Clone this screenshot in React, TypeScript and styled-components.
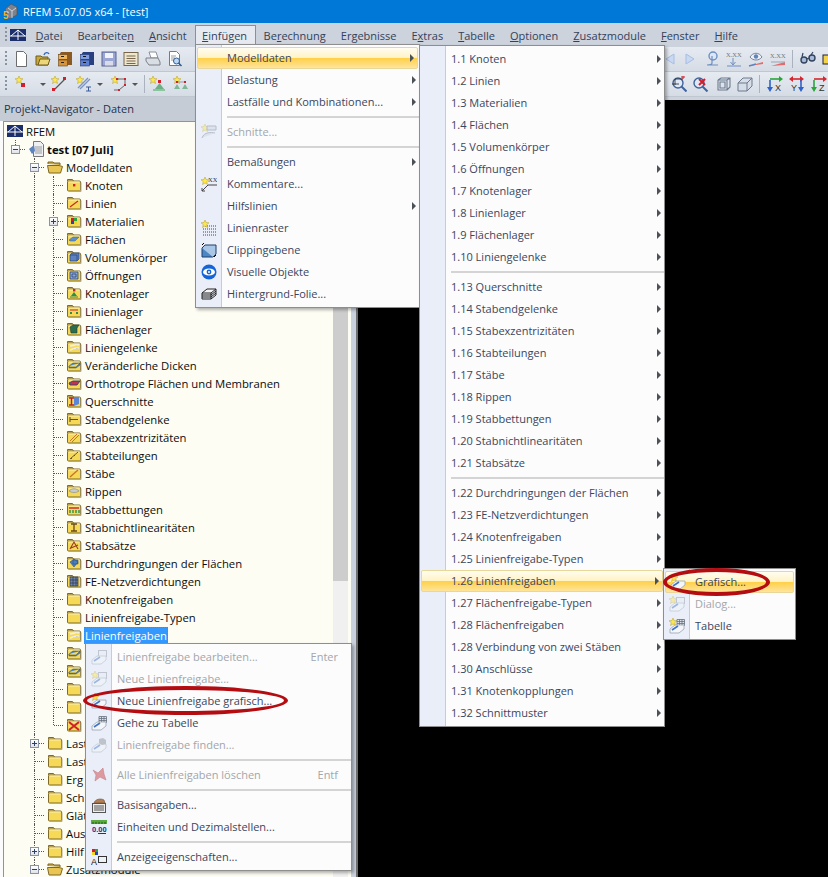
import React from "react";
import styled, { createGlobalStyle } from "styled-components";

const GlobalStyle = createGlobalStyle`
  html, body { margin: 0; padding: 0; background: #000; }
  #root { width: 828px; height: 877px; overflow: hidden; }
`;

const FONT = `"Open Sans", "Noto Sans", sans-serif`;

/* ---------- little drawings ---------- */
const star = (x = 0, y = 0) => (
  <polygon
    transform={`translate(${x} ${y})`}
    points="4,0 5,2.6 8,2.8 5.7,4.6 6.5,7.5 4,5.9 1.5,7.5 2.3,4.6 0,2.8 3,2.6"
    fill="#ffe94a"
    stroke="#b59a2b"
    strokeWidth="0.5"
  />
);

const sheet = (
  <>
    <path d="M1 11 L6 7 H15 V11 L10 15 H1z" fill="#f4f6f9" stroke="#9aa3b0" strokeWidth="0.8" />
    <path d="M3 12 L9 8" stroke="#3f74c9" strokeWidth="1.6" />
  </>
);

const panel = <rect x="7.5" y="1.5" width="8" height="6" fill="#e8edf5" stroke="#8d97a6" />;

const table = (
  <path d="M8 1.5h7.5v6H8zM8 3.5h7.5M8 5.5h7.5M10.5 1.5v6M13 1.5v6" fill="#dfe4ec" stroke="#67707e" strokeWidth="0.8" />
);

const GLYPHS: Record<string, React.ReactNode> = {
  logo: (
    <>
      <rect x="0" y="2" width="16" height="12" fill="#1c2f6d" />
      <path d="M0 9h16M8 3v10M8 3L1 9M8 3l7 6" stroke="#fff" strokeWidth="1" fill="none" />
    </>
  ),
  doc: <path d="M3.5 0.5h7l3 3v12h-10z" fill="#fff" stroke="#6c6c6c" />,
  open: (
    <>
      <path d="M1 5h5l1 1h6v8H1z" fill="#caa93c" stroke="#6f5b1d" />
      <path d="M3 14l2-6h10l-2 6z" fill="#ecd778" stroke="#6f5b1d" />
      <path d="M9 4c1-3 4-3 5-1" stroke="#3568b5" strokeWidth="1.4" fill="none" />
    </>
  ),
  drawerOrange: (
    <>
      <path d="M4 1h11v13H2V4z" fill="#8b5a22" />
      <rect x="1.5" y="3.5" width="9" height="5" fill="#f0b45c" stroke="#6a4315" strokeWidth="0.6" />
      <rect x="1.5" y="9" width="9" height="6" fill="#d8923a" stroke="#6a4315" strokeWidth="0.6" />
      <path d="M4 5.5h3M4 11.5h3" stroke="#222" />
    </>
  ),
  drawerBlue: (
    <>
      <path d="M4 1h11v13H2V4z" fill="#28407f" />
      <rect x="1.5" y="3.5" width="9" height="5" fill="#7e9de0" stroke="#233874" strokeWidth="0.6" />
      <rect x="1.5" y="9" width="9" height="6" fill="#5c7fcf" stroke="#233874" strokeWidth="0.6" />
      <path d="M4 5.5h3M4 11.5h3" stroke="#111" />
    </>
  ),
  save: (
    <>
      <rect x="1" y="1" width="14" height="14" fill="#9aa6d6" stroke="#59638f" />
      <rect x="4" y="2" width="8" height="5" fill="#f2f3f8" />
      <rect x="4" y="10" width="8" height="4.5" fill="#d9dce8" />
    </>
  ),
  notes: (
    <>
      <rect x="1" y="1.5" width="14" height="13" fill="#efe6d0" stroke="#77664a" />
      <path d="M3.5 5h9M3.5 7.5h9M3.5 10h9M3.5 12.5h9" stroke="#77664a" />
    </>
  ),
  printer: (
    <>
      <path d="M4 1h7l2 6H6z" fill="#fff" stroke="#8a8f99" />
      <path d="M1 7h12l2 4v3H4L1 10z" fill="#d9dde4" stroke="#7b808a" />
    </>
  ),
  preview: (
    <>
      <path d="M2.5 0.5h7l3 3v11h-10z" fill="#fff" stroke="#7a7a7a" />
      <path d="M4 5h5M4 7h4M4 9h3" stroke="#9a9a9a" />
      <circle cx="9.5" cy="10" r="3" fill="#bcd8f2" stroke="#2d5e9a" />
      <path d="M11.5 12l3 3" stroke="#2d5e9a" strokeWidth="1.6" />
    </>
  ),
  node: (
    <>
      {star(1, 0)}
      <rect x="7" y="7" width="4" height="4" fill="#d11f2b" />
    </>
  ),
  line: (
    <>
      {star(0, 0)}
      <path d="M3 14L14 3" stroke="#555" strokeWidth="1.2" />
      <rect x="12" y="1" width="3" height="3" fill="#d11f2b" />
      <rect x="1" y="12" width="3" height="3" fill="#d11f2b" />
    </>
  ),
  member: (
    <>
      {star(0, 0)}
      <path d="M2 12L12 2M4 13L14 3" stroke="#7c94c4" strokeWidth="1.4" />
      <path d="M10 11h5M12.5 11v4M10 15h5" stroke="#3c5a9a" />
    </>
  ),
  poly: (
    <>
      {star(0, 0)}
      <path d="M6 3h8v6l-6 5H3" stroke="#666" fill="none" />
      <path d="M5 2h2v2H5zM13 2h2v2h-2zM13 8h2v2h-2zM7 13h2v2H7z" fill="#d11f2b" />
    </>
  ),
  support: (
    <>
      {star(0, 0)}
      <rect x="9" y="4" width="3" height="3" fill="#d11f2b" />
      <path d="M10.5 7L15 13H6z" fill="#69b082" />
      <rect x="4" y="13" width="12" height="2" fill="#8cc4a0" />
    </>
  ),
  supports: (
    <>
      {star(0, 0)}
      <path d="M4 6h8" stroke="#999" />
      <path d="M3 5h2v2H3zM11 5h2v2h-2z" fill="#d11f2b" />
      <path d="M4 8l3 5H1zM12 8l3 5H9z" fill="#7fb794" />
    </>
  ),
  triLeft: <path d="M12 3v10L4 8z" fill="#c9d9f2" stroke="#a7bde2" />,
  triRight: <path d="M4 3v10l8-5z" fill="#c9d9f2" stroke="#a7bde2" />,
  pin: (
    <>
      <circle cx="9" cy="5" r="4" fill="#dce6f4" stroke="#6e8fc2" strokeWidth="1.4" />
      <path d="M8 5v7c0 2-3 2-5 2h11" stroke="#6e8fc2" strokeWidth="1.2" fill="none" />
    </>
  ),
  xxArrow: (
    <>
      <text x="0" y="6" fontSize="6.5" fontFamily="Liberation Serif, serif" fill="#777">X.XX</text>
      <path d="M7 7v6M4.5 11L7 14l2.5-3M1 15h14" stroke="#6e8fc2" fill="none" />
    </>
  ),
  eye: (
    <>
      <path d="M2 6c3-5 9-5 12 0c-3 4-9 4-12 0z" fill="#eef1f6" stroke="#7a8494" />
      <circle cx="8" cy="5.5" r="2.2" fill="#5f83bd" />
      <path d="M1 15l14-4v2L1 15z" fill="#e36b6b" />
      <path d="M1 15l7-2" stroke="#5f83bd" strokeWidth="1.4" />
    </>
  ),
  xxSlope: (
    <>
      <text x="0" y="7" fontSize="6.5" fontFamily="Liberation Serif, serif" fill="#777">X.XX</text>
      <path d="M1 15l14-4v3z" fill="#e36b6b" />
      <path d="M1 11h14" stroke="#9aa3b0" />
    </>
  ),
  glasses: (
    <>
      <circle cx="4" cy="9" r="3" fill="#a8bcd8" stroke="#33445f" strokeWidth="1.4" />
      <circle cx="12" cy="7" r="3" fill="#a8bcd8" stroke="#33445f" strokeWidth="1.4" />
      <path d="M6.5 8l3-1M2 6l1-4M11 4l2-3" stroke="#33445f" strokeWidth="1.2" />
    </>
  ),
  yellowBox: <rect x="1" y="4" width="6" height="9" fill="#f3d24e" stroke="#222" />,
  zoomRect: (
    <>
      <circle cx="7" cy="7" r="5" fill="#dfe9f6" stroke="#3f639c" strokeWidth="1.4" />
      <path d="M10.5 10.5l5 5" stroke="#3f639c" strokeWidth="2" />
      <path d="M4 9V3h8M1 8h7" stroke="#222" strokeWidth="0.8" fill="none" />
      <path d="M12 0v3M14 1h-4" stroke="#d11f2b" />
    </>
  ),
  zoomX: (
    <>
      <circle cx="6" cy="7" r="5" fill="#dfe9f6" stroke="#3f639c" strokeWidth="1.4" />
      <path d="M9.5 10.5l5 5" stroke="#3f639c" strokeWidth="2" />
      <path d="M6 3l6 6M12 3L6 9" stroke="#d11f2b" strokeWidth="2" />
    </>
  ),
  cube: (
    <path d="M3 4h9l3-2M3 4v10h9V4M12 14l3-3V2H6L3 4M5 6h5v6H5z" fill="#dde4ee" stroke="#6d7a8c" strokeWidth="1.1" />
  ),
  cubeSolid: (
    <>
      <path d="M1 7l5-5h9v8l-5 5H1z" fill="#d6dde8" stroke="#6d7a8c" />
      <path d="M1 7h9v8M10 7l5-5" stroke="#6d7a8c" fill="none" />
    </>
  ),
  axisX: (
    <>
      <path d="M3 3h11" stroke="#2ba53b" strokeWidth="1.6" />
      <path d="M12 0l4 3-4 3zM3 3v11" fill="#2ba53b" />
      <path d="M3 4v9" stroke="#2f62c8" strokeWidth="1.6" />
      <path d="M0 11l3 5 3-5z" fill="#2f62c8" />
      <text x="8" y="15" fontSize="9" fontFamily="Liberation Sans, sans-serif" fill="#333">X</text>
    </>
  ),
  axisY: (
    <>
      <path d="M2 3h11" stroke="#d8262e" strokeWidth="1.6" />
      <path d="M4 0L0 3l4 3zM11 0l4 3-4 3z" fill="#d8262e" />
      <path d="M12 4v9" stroke="#2f62c8" strokeWidth="1.6" />
      <path d="M9 11l3 5 3-5z" fill="#2f62c8" />
      <text x="2" y="15" fontSize="9" fontFamily="Liberation Sans, sans-serif" fill="#333">Y</text>
    </>
  ),
  axisZ: (
    <>
      <path d="M3 3h11" stroke="#d8262e" strokeWidth="1.6" />
      <path d="M12 0l4 3-4 3z" fill="#d8262e" />
      <path d="M3 4v9" stroke="#2ba53b" strokeWidth="1.6" />
      <path d="M0 11l3 5 3-5z" fill="#2ba53b" />
      <text x="8" y="15" fontSize="9" fontFamily="Liberation Sans, sans-serif" fill="#333">Z</text>
    </>
  ),
  schnitte: (
    <g opacity="0.45">
      {star(0, 0)}
      <path d="M6 2h9v4H6zM1 14c2-6 9-6 13-5" fill="#cfd6e2" stroke="#7a8494" />
    </g>
  ),
  comment: (
    <>
      {star(0, 1)}
      <text x="7" y="6" fontSize="6.5" fontFamily="Liberation Serif, serif" fill="#333">XX</text>
      <path d="M1 15L7 9h9M1 15v-3M1 15h3" stroke="#444" fill="none" />
    </>
  ),
  raster: (
    <>
      <path d="M2 6h13M2 9h13M2 12h13M2 15h13" stroke="#444" strokeDasharray="1 1" />
      {star(0, 0)}
    </>
  ),
  clip: (
    <>
      <path d="M1 6h11v9H1z" fill="#4d86c5" stroke="#1f3f6b" />
      <path d="M1 6l3-3h11v9l-3 3" fill="#a9c6e6" stroke="#1f3f6b" />
      <path d="M3 1L1 3M13 15l2-2" stroke="#000" />
    </>
  ),
  visual: (
    <>
      <circle cx="8" cy="8" r="7.5" fill="#1565d8" />
      <ellipse cx="8" cy="8" rx="6" ry="3.6" fill="#fff" />
      <circle cx="8" cy="8" r="2.4" fill="#1565d8" />
      <circle cx="8" cy="8" r="1" fill="#fff" />
    </>
  ),
  folie: (
    <>
      <path d="M1 7L6 3h9l-5 4z" fill="#f5f5f5" stroke="#222" />
      <path d="M1 7v2h9l5-4V3M1 9v2h9l5-4V5M1 11v2h9l5-4V7M10 7v6" stroke="#222" fill="none" />
    </>
  ),
  lfEdit: <g opacity="0.45">{panel}{sheet}</g>,
  lfNew: <g opacity="0.45">{star(0, 0)}{panel}{sheet}</g>,
  lfDraw: <>{star(0, 0)}{sheet}</>,
  lfTable: <>{star(0, 0)}{table}{sheet}</>,
  lfTableOnly: <>{table}{sheet}</>,
  lfFind: (
    <g opacity="0.45">
      {sheet}
      <path d="M8 2l4-1 3 2v4l-4 1-3-2z" fill="#8b8f96" />
    </g>
  ),
  deleteAll: (
    <path d="M2 3l5 3 5-5 1 6 2 6-6-3-5 4 1-6z" fill="#dc9aa0" stroke="#c98088" strokeWidth="0.6" />
  ),
  basis: (
    <>
      <rect x="1.5" y="6.5" width="13" height="9" fill="#eee" stroke="#555" />
      <path d="M3 9h10M3 11h10M3 13h10" stroke="#555" />
      <path d="M3 6c1-4 7-5 10-3l1 3z" fill="#b08058" stroke="#6e4a30" strokeWidth="0.6" />
    </>
  ),
  units: (
    <>
      <rect x="0" y="1" width="16" height="4" fill="#5aa93f" />
      <path d="M2 3v2M5 3v2M8 3v2M11 3v2M14 3v2" stroke="#1f5a12" />
      <text x="1" y="13" fontSize="7.5" fontWeight="700" fontFamily="Liberation Sans, sans-serif" fill="#1b2f9a">0.00</text>
      <path d="M7 14.5h8" stroke="#1b2f9a" />
    </>
  ),
  display: (
    <>
      <rect x="1" y="0" width="3" height="3" fill="#d11f2b" />
      <rect x="4" y="0" width="3" height="3" fill="#2ba53b" />
      <rect x="1" y="3" width="3" height="3" fill="#f1d42a" />
      <rect x="4" y="3" width="3" height="3" fill="#2046c8" />
      <rect x="7.5" y="7.5" width="8" height="6" fill="#eef1f6" stroke="#333" />
      <text x="0" y="15.5" fontSize="9" fontFamily="Liberation Sans, sans-serif" fill="#111">A</text>
    </>
  ),
  docPage: (
    <>
      <path d="M5.5 0.5h7l3 3v12h-10z" fill="#eef0f4" stroke="#777" />
      <path d="M7 6h7M7 8h7M7 10h7M7 12h7" stroke="#999" />
      <path d="M1 8l5-4 1 6-3 3z" fill="#5f83bd" />
    </>
  ),
};

const Ico = ({ name }: { name: string }) => (
  <svg width="16" height="16" viewBox="0 0 16 16" style={{ display: "block" }}>
    {GLYPHS[name]}
  </svg>
);

const MARKS: Record<string, React.ReactNode> = {
  dot: <rect x="7" y="7" width="2.4" height="2.4" fill="#d11f2b" />,
  line: <path d="M4 12l8-6" stroke="#c9262b" strokeWidth="1.1" />,
  mat: (
    <>
      <rect x="5" y="5" width="3" height="3" fill="#d11f2b" />
      <rect x="8" y="5" width="3" height="3" fill="#2ba53b" />
      <rect x="5" y="8" width="3" height="3" fill="#2046c8" />
      <rect x="8" y="8" width="3" height="3" fill="#f1d42a" />
    </>
  ),
  plane: <path d="M3 9l4-3h6l-4 4H4z" fill="#5b8fd0" stroke="#35608f" strokeWidth="0.5" />,
  cube: <path d="M4 6h7v6H4zM4 6l2-2h7v6l-2 2" fill="#5d82c0" stroke="#27457c" strokeWidth="0.7" />,
  hole: <path d="M4 5h8v7H4zM6 7h4v3H6z" fill="#8fa8cf" stroke="#27457c" strokeWidth="0.8" />,
  nodeSup: (
    <>
      <rect x="7" y="4" width="2.4" height="2.4" fill="#d11f2b" />
      <path d="M8 7l3 4H5z" fill="#2f8e4f" />
      <path d="M4 12h8" stroke="#2f8e4f" />
    </>
  ),
  lineSup: (
    <>
      <path d="M4 7h8" stroke="#c9262b" />
      <path d="M4 10h2M10 10h2" stroke="#2f8e4f" strokeWidth="2" />
    </>
  ),
  surfSup: <path d="M4 6l3-2h6l-2 3v5H5z" fill="#2c6c4f" stroke="#1d3f32" strokeWidth="0.6" />,
  hinge: <path d="M4 7l6-1h3M4 11l6-2h3" stroke="#eef1f6" strokeWidth="1.4" />,
  slab: <path d="M3 9l4-3h7l-4 4H3zM3 9v2h7l4-3V6" fill="#4f83c6" stroke="#2b507f" strokeWidth="0.5" />,
  ortho: <path d="M3 8l4-2h7l-3 4H4z" fill="#c9304a" stroke="#27457c" strokeWidth="0.9" />,
  section: (
    <>
      <path d="M8 4h5v7l-5 2z" fill="#5b86d6" />
      <path d="M3 5h5M3 12h5M5.5 5v7" stroke="#b4202c" strokeWidth="1.4" />
    </>
  ),
  memHinge: <path d="M4 6v5M4 8.5h8" stroke="#5c5032" strokeWidth="1.1" />,
  ecc: <path d="M4 12l7-7M6 13l7-7" stroke="#c9742b" strokeWidth="1" />,
  split: (
    <>
      <path d="M4 12l8-7" stroke="#6a5a30" />
      <path d="M5 11h1v1H5zM8 8h1v1H8zM11 5h1v1h-1z" fill="#d11f2b" />
    </>
  ),
  member: <path d="M4 12l8-7" stroke="#c9742b" strokeWidth="1.4" />,
  rib: <path d="M3 8c3-3 7-3 10 0c-3 2-7 2-10 0z" fill="#c8ccd2" stroke="#7d848e" strokeWidth="0.6" />,
  bed: (
    <>
      <path d="M3 7h10" stroke="#c9262b" strokeWidth="1.4" />
      <path d="M4 9v3M7 9v3M10 9v3M13 9v3" stroke="#2f8e4f" strokeWidth="1.4" />
    </>
  ),
  nonlin: <path d="M5 5h6M5 12h6M8 5v7" stroke="#6a4a14" strokeWidth="1.3" />,
  set: <path d="M4 12l4-7 4 7M5 11l7-3" stroke="#9a3a20" strokeWidth="1.1" fill="none" />,
  inter: <path d="M4 7l4-3 4 3-4 5zM7 5h5v4H7z" fill="#4a7fc0" stroke="#2b507f" strokeWidth="0.6" />,
  mesh: <path d="M4 4h8v9H4zM4 7h8M4 10h8M7 4v9M10 4v9" fill="#6f86ad" stroke="#2b3850" strokeWidth="0.7" />,
  cross: <path d="M3 5l10 8M13 5L3 13" stroke="#d11f2b" strokeWidth="2" />,
};

const Folder = ({ mark, open }: { mark?: string; open?: boolean }) => (
  <svg width="16" height="16" viewBox="0 0 16 16" style={{ display: "block", flexShrink: 0 }}>
    {open ? (
      <>
        <path d="M1 5V3h5l1 1h6v2" fill="#c9a73c" stroke="#7c6727" />
        <path d="M0.5 6.5h11.5l3.5 1-2 6.5H2z" fill="#e9c653" stroke="#7c6727" />
      </>
    ) : (
      <>
        <path d="M1.5 4V2.5h5l1 1.5" fill="#f2d874" stroke="#7f6a28" />
        <rect x="1.5" y="4" width="13" height="10" rx="1" fill="#f6d957" stroke="#7f6a28" />
        <path d="M2.5 5h11" stroke="#fdf3b8" />
        <path d="M3 14.5h12v-9" stroke="#b6a888" fill="none" />
      </>
    )}
    {mark && MARKS[mark]}
  </svg>
);

/* ---------- window chrome ---------- */
const Page = styled.div`
  width: 828px;
  height: 877px;
  display: flex;
  flex-direction: column;
  overflow: hidden;
  position: relative;
  font-family: ${FONT};
  background: #ccd3dd;
`;

const TitleBar = styled.div`
  height: 23px;
  background: #0078d7;
  color: #fff;
  font-size: 11px;
  display: flex;
  align-items: center;
  gap: 5px;
  padding-left: 2px;
  flex-shrink: 0;
`;

const MenuBar = styled.div`
  height: 24px;
  background: #ccd3dd;
  display: flex;
  align-items: center;
  padding-left: 5px;
  font-size: 11px;
  color: #33415a;
  flex-shrink: 0;
  position: relative;
`;

const Grip = styled.span`
  width: 2px;
  height: 16px;
  flex-shrink: 0;
  background: repeating-linear-gradient(#8a93a0 0 2px, transparent 2px 4px);
`;

const MenuEntry = styled.span<{ $open?: boolean }>`
  padding: ${(p) => (p.$open ? "0 9px 0 7px" : "0 7.5px")};
  margin-left: ${(p) => (p.$open ? "1px" : "0")};
  height: ${(p) => (p.$open ? "21px" : "auto")};
  display: flex;
  align-items: center;
  white-space: nowrap;
  ${(p) => p.$open && "background: #e6eaf0; outline: 1px solid #8b9097; outline-offset: -1px;"}
`;

const LogoSlot = styled.span`
  margin: 0 2px 0 3px;
`;

const Toolbar = styled.div<{ $h: number }>`
  height: ${(p) => p.$h}px;
  flex-shrink: 0;
  background: linear-gradient(#e6ebf2, #d6dce5);
  border-bottom: 1px solid #c0c7d1;
  box-sizing: border-box;
  display: flex;
  align-items: center;
  padding-left: 5px;
  overflow: hidden;
`;

const Tool = styled.span<{ $ml?: number }>`
  flex-shrink: 0;
  width: 16px;
  height: 16px;
  margin-left: ${(p) => p.$ml ?? 6}px;
`;

const Caret = styled.span<{ $ml: number }>`
  flex-shrink: 0;
  margin-left: ${(p) => p.$ml}px;
  border-left: 3px solid transparent;
  border-right: 3px solid transparent;
  border-top: 3px solid #555;
`;

const ToolSep = styled.span<{ $ml?: number }>`
  flex-shrink: 0;
  width: 1px;
  height: 18px;
  background: #aab2be;
  margin-left: ${(p) => p.$ml ?? 6}px;
`;

const ToolRight = styled.div<{ $w: number }>`
  margin-left: auto;
  width: ${(p) => p.$w}px;
  display: flex;
  align-items: center;
  flex-shrink: 0;
  overflow: hidden;
`;

/* ---------- working area ---------- */
const Work = styled.div`
  flex: 1;
  display: flex;
  min-height: 0;
`;

const Navigator = styled.div`
  width: 351px;
  display: flex;
  flex-direction: column;
  padding-left: 3px;
  box-sizing: border-box;
  background: #fbfbfb;
  flex-shrink: 0;
`;

const NavTitle = styled.div`
  height: 24px;
  margin-left: -3px;
  background: #c5ccd6;
  color: #26324a;
  font-size: 11px;
  padding: 0 0 2px 4px;
  box-sizing: border-box;
  display: flex;
  align-items: center;
  flex-shrink: 0;
`;

const TreeBox = styled.div`
  flex: 1;
  min-height: 0;
  display: flex;
  background: #fdfdf4;
  border-left: 1px solid #8d95a3;
  border-top: 1px solid #8d95a3;
  margin-top: 0;
`;

const TreeRows = styled.div`
  flex: 1;
  min-width: 0;
  overflow: hidden;
  padding-left: 2px;
`;

const ScrollTrack = styled.div`
  width: 15px;
  margin-right: 3px;
  background: #f0f0f0;
  flex-shrink: 0;
`;

const ScrollThumb = styled.div`
  height: 459px;
  background: #cdcdcd;
`;

const Splitter = styled.div`
  width: 7px;
  flex-shrink: 0;
  background: #c9d1dc;
  border-right: 2px solid #6f6f6f;
  box-sizing: border-box;
  margin-top: 3px;
`;

const Canvas = styled.div`
  flex: 1;
  background: #000;
  margin-top: 3px;
`;

/* ---------- tree ---------- */
const Row = styled.div`
  height: 18px;
  display: flex;
  align-items: center;
  font-size: 11.3px;
  color: #0c0c0c;
  white-space: nowrap;
`;

const Cell = styled.span<{ $kind: "none" | "line" | "tee" | "corner" | "start" }>`
  width: 19px;
  height: 18px;
  flex-shrink: 0;
  position: relative;
  &::before {
    content: "";
    position: absolute;
    left: 9px;
    top: ${(p) => (p.$kind === "start" ? "9px" : "0")};
    height: ${(p) => (p.$kind === "corner" ? "9px" : p.$kind === "start" ? "9px" : "18px")};
    border-left: 1px dotted ${(p) => (p.$kind === "none" ? "transparent" : "#555")};
  }
  &::after {
    content: "";
    position: absolute;
    left: 10px;
    top: 9px;
    width: 9px;
    border-top: 1px dotted ${(p) => (p.$kind === "tee" || p.$kind === "corner" ? "#555" : "transparent")};
  }
`;

const Expander = styled.span`
  position: absolute;
  z-index: 1;
  left: 5px;
  top: 5px;
  width: 7px;
  height: 7px;
  border: 1px solid #8a93a6;
  background: linear-gradient(#fff, #dfe3ea);
  &::before {
    content: "";
    position: absolute;
    left: 1px;
    right: 1px;
    top: 3px;
    height: 1px;
    background: #2c3f66;
  }
`;

const PlusBar = styled.span`
  position: absolute;
  left: 3px;
  top: 1px;
  bottom: 1px;
  width: 1px;
  background: #2c3f66;
`;

const RowIcon = styled.span<{ $root?: boolean }>`
  margin-left: ${(p) => (p.$root ? 1 : 3)}px;
  flex-shrink: 0;
`;

const RowLabel = styled.span<{ $bold?: boolean; $selected?: boolean }>`
  margin-left: 2px;
  padding: 0 1px;
  line-height: 17px;
  font-weight: ${(p) => (p.$bold ? 700 : 400)};
  ${(p) => p.$selected && "background: #3399ff; color: #fff; outline: 1px dotted #c66a1e; outline-offset: -1px;"}
`;

type TreeItem = { label: string; mark?: string; exp?: "plus" | "minus"; last?: boolean; selected?: boolean };

const CHILDREN: TreeItem[] = [
  { label: "Knoten", mark: "dot" },
  { label: "Linien", mark: "line" },
  { label: "Materialien", mark: "mat", exp: "plus" },
  { label: "Flächen", mark: "plane" },
  { label: "Volumenkörper", mark: "cube" },
  { label: "Öffnungen", mark: "hole" },
  { label: "Knotenlager", mark: "nodeSup" },
  { label: "Linienlager", mark: "lineSup" },
  { label: "Flächenlager", mark: "surfSup" },
  { label: "Liniengelenke", mark: "hinge" },
  { label: "Veränderliche Dicken", mark: "slab" },
  { label: "Orthotrope Flächen und Membranen", mark: "ortho" },
  { label: "Querschnitte", mark: "section" },
  { label: "Stabendgelenke", mark: "memHinge" },
  { label: "Stabexzentrizitäten", mark: "ecc" },
  { label: "Stabteilungen", mark: "split" },
  { label: "Stäbe", mark: "member" },
  { label: "Rippen", mark: "rib" },
  { label: "Stabbettungen", mark: "bed" },
  { label: "Stabnichtlinearitäten", mark: "nonlin" },
  { label: "Stabsätze", mark: "set" },
  { label: "Durchdringungen der Flächen", mark: "inter" },
  { label: "FE-Netzverdichtungen", mark: "mesh" },
  { label: "Knotenfreigaben" },
  { label: "Linienfreigabe-Typen" },
  { label: "Linienfreigaben", mark: "hinge", selected: true },
  // the next rows lie wholly behind the context menu, so they show no label
  { label: "", mark: "slab" },
  { label: "", mark: "slab" },
  { label: "" },
  { label: "" },
  { label: "", mark: "cross", last: true },
];

// only the start of these labels shows left of the context menu
const SECTIONS: TreeItem[] = [
  { label: "Last", exp: "plus" },
  { label: "Last" },
  { label: "Erg" },
  { label: "Sch" },
  { label: "Glät" },
  { label: "Aus" },
  { label: "Hilf", exp: "plus" },
];

const Toggle = ({ exp }: { exp?: "plus" | "minus" }) =>
  exp ? <Expander>{exp === "plus" && <PlusBar />}</Expander> : null;

const Tree = () => (
  <TreeRows>
    <Row>
      <RowIcon $root>
        <Ico name="logo" />
      </RowIcon>
      <RowLabel>RFEM</RowLabel>
    </Row>
    <Row>
      <Cell $kind="corner">
        <Toggle exp="minus" />
      </Cell>
      <RowIcon>
        <Ico name="docPage" />
      </RowIcon>
      <RowLabel $bold>test [07 Juli]</RowLabel>
    </Row>
    <Row>
      <Cell $kind="none" />
      <Cell $kind="tee">
        <Toggle exp="minus" />
      </Cell>
      <RowIcon>
        <Folder open />
      </RowIcon>
      <RowLabel>Modelldaten</RowLabel>
    </Row>
    {CHILDREN.map((item, i) => (
      <Row key={i}>
        <Cell $kind="none" />
        <Cell $kind="line" />
        <Cell $kind={item.last ? "corner" : "tee"}>
          <Toggle exp={item.exp} />
        </Cell>
        <RowIcon>
          <Folder mark={item.mark} />
        </RowIcon>
        {item.label && <RowLabel $selected={item.selected}>{item.label}</RowLabel>}
      </Row>
    ))}
    {SECTIONS.map((item, i) => (
      <Row key={i}>
        <Cell $kind="none" />
        <Cell $kind="tee">
          <Toggle exp={item.exp} />
        </Cell>
        <RowIcon>
          <Folder />
        </RowIcon>
        <RowLabel>{item.label}</RowLabel>
      </Row>
    ))}
    <Row>
      <Cell $kind="none" />
      <Cell $kind="corner">
        <Toggle exp="minus" />
      </Cell>
      <RowIcon>
        <Folder open />
      </RowIcon>
      <RowLabel>Zusatzmodule</RowLabel>
    </Row>
  </TreeRows>
);

/* ---------- popup menus ---------- */
const Popup = styled.div<{ $x: number; $y: number; $w: number }>`
  position: absolute;
  left: ${(p) => p.$x}px;
  top: ${(p) => p.$y}px;
  width: ${(p) => p.$w}px;
  box-sizing: border-box;
  padding: 2px 0;
  border: 1px solid #8e8e8e;
  box-shadow: 2px 2px 3px rgba(0, 0, 0, 0.3);
  background: linear-gradient(to right, #e9eef8 25px, #c6cbd4 25px, #c6cbd4 26px, #fcfcfc 26px);
  font-size: 11px;
  color: #3a4660;
  z-index: 2;
`;

const Item = styled.div<{ $active?: boolean; $off?: boolean }>`
  height: 22px;
  box-sizing: border-box;
  display: flex;
  align-items: center;
  position: relative;
  white-space: nowrap;
  color: ${(p) => (p.$off ? "#a3a6ab" : "inherit")};
  ${(p) =>
    p.$active &&
    `margin: 0 1px;
     border: 1px solid #e9d69a;
     border-radius: 2px;
     background: linear-gradient(#fffdf0 0%, #fff3c6 48%, #ffd04a 52%, #ffe59c 100%);`}
`;

const ItemIcon = styled.span<{ $active?: boolean }>`
  width: ${(p) => (p.$active ? "23px" : "25px")};
  display: flex;
  justify-content: center;
  flex-shrink: 0;
`;

const ItemLabel = styled.span`
  margin: 0 0 2px 6px;
`;

const Shortcut = styled.span`
  margin: 0 13px 2px auto;
`;

const Arrow = styled.span`
  margin-left: auto;
  margin-right: 3px;
  border-left: 4px solid #4c5157;
  border-top: 4px solid transparent;
  border-bottom: 4px solid transparent;
`;

const Sep = styled.div`
  height: 8px;
  margin-left: 31px;
  position: relative;
  &::before {
    content: "";
    position: absolute;
    left: 0;
    right: 0;
    top: 3px;
    height: 2px;
    background: #d4d4d4;
  }
`;

const RedRing = styled.span<{ $x: number; $y: number; $w: number; $h: number }>`
  position: absolute;
  left: ${(p) => p.$x}px;
  top: ${(p) => p.$y}px;
  width: ${(p) => p.$w}px;
  height: ${(p) => p.$h}px;
  box-sizing: border-box;
  border: 4px solid #b30d12;
  border-radius: 50%;
  z-index: 3;
`;

type Entry =
  | "sep"
  | { label: string; icon?: string; sub?: boolean; off?: boolean; active?: boolean; key?: string };

const Menu = ({ x, y, w, entries }: { x: number; y: number; w: number; entries: Entry[] }) => (
  <Popup $x={x} $y={y} $w={w}>
    {entries.map((e, i) =>
      e === "sep" ? (
        <Sep key={i} />
      ) : (
        <Item key={i} $active={e.active} $off={e.off}>
          <ItemIcon $active={e.active}>{e.icon && <Ico name={e.icon} />}</ItemIcon>
          <ItemLabel>{e.label}</ItemLabel>
          {e.key && <Shortcut>{e.key}</Shortcut>}
          {e.sub && <Arrow />}
        </Item>
      )
    )}
  </Popup>
);

const sub = (label: string, active?: boolean): Entry => ({ label, sub: true, active });

const INSERT: Entry[] = [
  sub("Modelldaten", true),
  sub("Belastung"),
  sub("Lastfälle und Kombinationen..."),
  "sep",
  { label: "Schnitte...", icon: "schnitte", off: true },
  "sep",
  sub("Bemaßungen"),
  { label: "Kommentare...", icon: "comment" },
  sub("Hilfslinien"),
  { label: "Linienraster", icon: "raster" },
  { label: "Clippingebene", icon: "clip" },
  { label: "Visuelle Objekte", icon: "visual" },
  { label: "Hintergrund-Folie...", icon: "folie" },
];

const MODEL: Entry[] = [
  sub("1.1 Knoten"),
  sub("1.2 Linien"),
  sub("1.3 Materialien"),
  sub("1.4 Flächen"),
  sub("1.5 Volumenkörper"),
  sub("1.6 Öffnungen"),
  sub("1.7 Knotenlager"),
  sub("1.8 Linienlager"),
  sub("1.9 Flächenlager"),
  sub("1.10 Liniengelenke"),
  "sep",
  sub("1.13 Querschnitte"),
  sub("1.14 Stabendgelenke"),
  sub("1.15 Stabexzentrizitäten"),
  sub("1.16 Stabteilungen"),
  sub("1.17 Stäbe"),
  sub("1.18 Rippen"),
  sub("1.19 Stabbettungen"),
  sub("1.20 Stabnichtlinearitäten"),
  sub("1.21 Stabsätze"),
  "sep",
  sub("1.22 Durchdringungen der Flächen"),
  sub("1.23 FE-Netzverdichtungen"),
  sub("1.24 Knotenfreigaben"),
  sub("1.25 Linienfreigabe-Typen"),
  sub("1.26 Linienfreigaben", true),
  sub("1.27 Flächenfreigabe-Typen"),
  sub("1.28 Flächenfreigaben"),
  sub("1.28 Verbindung von zwei Stäben"),
  sub("1.30 Anschlüsse"),
  sub("1.31 Knotenkopplungen"),
  sub("1.32 Schnittmuster"),
];

const RELEASE: Entry[] = [
  { label: "Grafisch...", icon: "lfDraw", active: true },
  { label: "Dialog...", icon: "lfNew", off: true },
  { label: "Tabelle", icon: "lfTable" },
];

const CONTEXT: Entry[] = [
  { label: "Linienfreigabe bearbeiten...", icon: "lfEdit", off: true, key: "Enter" },
  { label: "Neue Linienfreigabe...", icon: "lfNew", off: true },
  { label: "Neue Linienfreigabe grafisch...", icon: "lfDraw" },
  { label: "Gehe zu Tabelle", icon: "lfTableOnly" },
  { label: "Linienfreigabe finden...", icon: "lfFind", off: true },
  "sep",
  { label: "Alle Linienfreigaben löschen", icon: "deleteAll", off: true, key: "Entf" },
  "sep",
  { label: "Basisangaben...", icon: "basis" },
  { label: "Einheiten und Dezimalstellen...", icon: "units" },
  "sep",
  { label: "Anzeigeeigenschaften...", icon: "display" },
];

const MENU_NAMES: [string, string, string][] = [
  ["", "D", "atei"],
  ["Bearbeite", "n", ""],
  ["", "A", "nsicht"],
  ["", "E", "infügen"],
  ["Be", "r", "echnung"],
  ["Er", "g", "ebnisse"],
  ["E", "x", "tras"],
  ["", "T", "abelle"],
  ["", "O", "ptionen"],
  ["", "Z", "usatzmodule"],
  ["", "F", "enster"],
  ["", "H", "ilfe"],
];

export default function App() {
  return (
    <Page>
      <GlobalStyle />
      <TitleBar>
        <svg width="16" height="18" viewBox="0 0 16 18">
          <path d="M3 6l6-5 6 3v8l-8 4z" fill="#7d828c" stroke="#4c4f55" strokeWidth="0.6" />
          <path d="M6 5l4 3 4-3M10 8v7M5 9l2 1" stroke="#d8dbe0" strokeWidth="0.9" fill="none" />
          <text x="1" y="16" fontSize="10" fontWeight="700" fontFamily="Liberation Sans, sans-serif" fill="#f0b429">5</text>
        </svg>
        RFEM 5.07.05 x64 - [test]
      </TitleBar>
      <MenuBar>
        <Grip />
        <LogoSlot>
          <Ico name="logo" />
        </LogoSlot>
        {MENU_NAMES.map(([a, b, c]) => (
          <MenuEntry key={a + b + c} $open={b === "E"}>
            {a}
            <u>{b}</u>
            {c}
          </MenuEntry>
        ))}
      </MenuBar>
      <Toolbar $h={25}>
        <Grip />
        <Tool $ml={6}><Ico name="doc" /></Tool>
        <Tool><Ico name="open" /></Tool>
        <Tool><Ico name="drawerOrange" /></Tool>
        <Tool><Ico name="drawerBlue" /></Tool>
        <Tool><Ico name="save" /></Tool>
        <Tool><Ico name="notes" /></Tool>
        <Tool><Ico name="printer" /></Tool>
        <Tool><Ico name="preview" /></Tool>
        <ToolRight $w={166}>
          <Tool $ml={0}><Ico name="triLeft" /></Tool>
          <Tool $ml={4}><Ico name="triRight" /></Tool>
          <Tool $ml={6}><Ico name="pin" /></Tool>
          <Tool><Ico name="xxArrow" /></Tool>
          <Tool><Ico name="eye" /></Tool>
          <Tool><Ico name="xxSlope" /></Tool>
          <ToolSep />
          <Tool $ml={7}><Ico name="glasses" /></Tool>
          <Tool $ml={6}><Ico name="yellowBox" /></Tool>
        </ToolRight>
      </Toolbar>
      <Toolbar $h={25}>
        <Grip />
        <Tool $ml={7}><Ico name="node" /></Tool>
        <Caret $ml={10} />
        <Tool $ml={5}><Ico name="line" /></Tool>
        <Tool $ml={9}><Ico name="member" /></Tool>
        <Caret $ml={5} />
        <Tool $ml={8}><Ico name="poly" /></Tool>
        <Caret $ml={5} />
        <ToolSep />
        <Tool $ml={4}><Ico name="support" /></Tool>
        <Tool $ml={8}><Ico name="supports" /></Tool>
        <ToolRight $w={157}>
          <Tool $ml={0}><Ico name="zoomRect" /></Tool>
          <Tool><Ico name="zoomX" /></Tool>
          <Tool><Ico name="cube" /></Tool>
          <Tool><Ico name="cubeSolid" /></Tool>
          <ToolSep />
          <Tool $ml={7}><Ico name="axisX" /></Tool>
          <Tool $ml={6}><Ico name="axisY" /></Tool>
          <Tool $ml={6}><Ico name="axisZ" /></Tool>
        </ToolRight>
      </Toolbar>
      <Work>
        <Navigator>
          <NavTitle>Projekt-Navigator - Daten</NavTitle>
          <TreeBox>
            <Tree />
            <ScrollTrack>
              <ScrollThumb />
            </ScrollTrack>
          </TreeBox>
        </Navigator>
        <Splitter />
        <Canvas />
      </Work>
      <Menu x={195} y={44} w={225} entries={INSERT} />
      <Menu x={419} y={45} w={246} entries={MODEL} />
      <Menu x={663} y={568} w={133} entries={RELEASE} />
      <Menu x={85} y={643} w={267} entries={CONTEXT} />
      <RedRing $x={663} $y={568} $w={107} $h={28} />
      <RedRing $x={83} $y={686} $w={205} $h={29} />
    </Page>
  );
}
